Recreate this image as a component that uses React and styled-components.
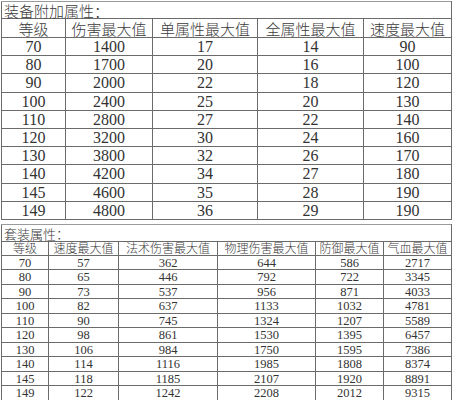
import React from "react";
import styled, { createGlobalStyle } from "styled-components";

const GlobalStyle = createGlobalStyle`
  html, body {
    margin: 0;
    padding: 0;
    background: #ffffff;
  }
`;

const equipCols = [64, 87, 105, 106, 88];
const equipHead = ["等级", "伤害最大值", "单属性最大值", "全属性最大值", "速度最大值"];
const equipRows = [
  [70, 1400, 17, 14, 90],
  [80, 1700, 20, 16, 100],
  [90, 2000, 22, 18, 120],
  [100, 2400, 25, 20, 130],
  [110, 2800, 27, 22, 140],
  [120, 3200, 30, 24, 160],
  [130, 3800, 32, 26, 170],
  [140, 4200, 34, 27, 180],
  [145, 4600, 35, 28, 190],
  [149, 4800, 36, 29, 190],
];

const setCols = [47, 70, 99, 98, 68, 68];
const setHead = ["等级", "速度最大值", "法术伤害最大值", "物理伤害最大值", "防御最大值", "气血最大值"];
const setRows = [
  [70, 57, 362, 644, 586, 2717],
  [80, 65, 446, 792, 722, 3345],
  [90, 73, 537, 956, 871, 4033],
  [100, 82, 637, 1133, 1032, 4781],
  [110, 90, 745, 1324, 1207, 5589],
  [120, 98, 861, 1530, 1395, 6457],
  [130, 106, 984, 1750, 1595, 7386],
  [140, 114, 1116, 1985, 1808, 8374],
  [145, 118, 1185, 2107, 1920, 8891],
  [149, 122, 1242, 2208, 2012, 9315],
];

const Page = styled.div`
  display: flex;
  flex-direction: column;
  gap: 4px;
  padding: 1px 0 0 1px;
  width: 451px;
`;

const Table = styled.table`
  border-collapse: collapse;
  table-layout: fixed;
  width: 451px;
  color: #333;
  font-family: "Liberation Serif", "Noto Sans CJK SC", serif;
`;

const Cell = styled.td`
  border: 1px solid #6b6b6b;
  padding: 1px 0 0;
  text-align: center;
  vertical-align: middle;
  white-space: nowrap;
  height: ${(p) => p.$h}px;
  font-size: ${(p) => p.$size}px;
  line-height: 1;
`;

const HeadCell = styled(Cell)`
  padding: 0;
  font-family: "Noto Sans CJK SC", sans-serif;
  font-weight: 300;
  color: #3c3c3c;
`;

const TitleCell = styled(Cell)`
  padding: 1px 0 0 2px;
  text-align: left;
  font-family: "Noto Sans CJK SC", sans-serif;
  font-weight: 300;
  color: #3c3c3c;
  border-top-color: #9a9a9a;
`;

const DataTable = ({ cols, head, rows, title, titleH, titleSize, headH, headSize, rowH, rowSize }) => (
  <Table>
    <colgroup>
      {cols.map((w, i) => (
        <col key={i} style={{ width: w }} />
      ))}
    </colgroup>
    <tbody>
      <tr>
        <TitleCell colSpan={cols.length} $h={titleH} $size={titleSize}>
          {title}
        </TitleCell>
      </tr>
      <tr>
        {head.map((h) => (
          <HeadCell key={h} $h={headH} $size={headSize}>
            {h}
          </HeadCell>
        ))}
      </tr>
      {rows.map((r, i) => (
        <tr key={i}>
          {r.map((v, j) => (
            <Cell key={j} $h={rowH} $size={rowSize}>
              {v}
            </Cell>
          ))}
        </tr>
      ))}
    </tbody>
  </Table>
);

const App = () => (
  <>
    <GlobalStyle />
    <Page>
      <DataTable
        cols={equipCols}
        head={equipHead}
        rows={equipRows}
        title="装备附加属性："
        titleH={15}
        titleSize={15}
        headH={18}
        headSize={15}
        rowH={16.2}
        rowSize={16}
      />
      <DataTable
        cols={setCols}
        head={setHead}
        rows={setRows}
        title="套装属性："
        titleH={15}
        titleSize={13}
        headH={13}
        headSize={12}
        rowH={12.3}
        rowSize={12.5}
      />
    </Page>
  </>
);

export default App;
